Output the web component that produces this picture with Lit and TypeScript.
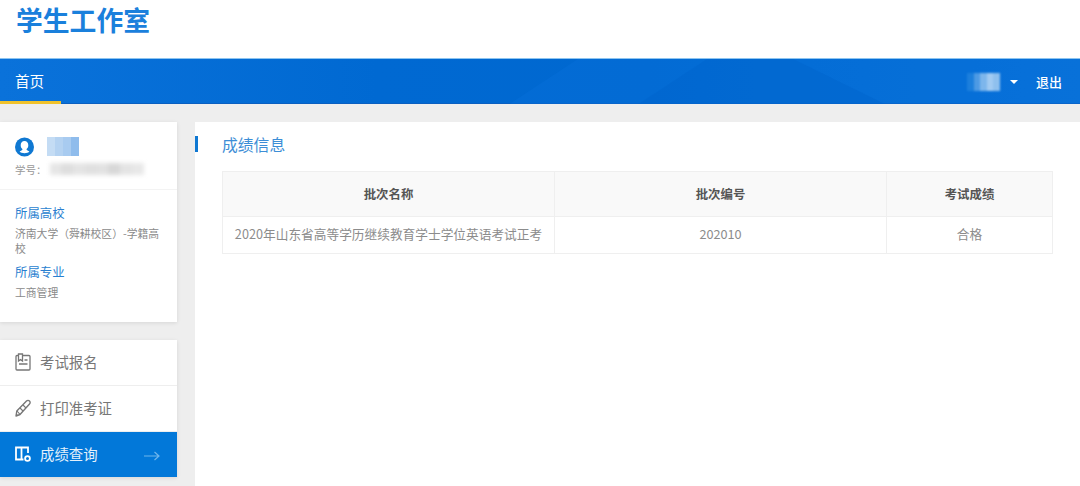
import { LitElement, html, css } from "lit";
import { customElement } from "lit/decorators.js";

const blurCells = (cols: string[], cls: string) =>
  html`<span class=${cls}>${cols.map((c) => html`<i style="background:${c}"></i>`)}</span>`;

@customElement("app-root")
export class AppRoot extends LitElement {
  static styles = css`
    :host {
      display: block;
      width: 1080px;
      height: 486px;
      overflow: hidden;
      background: #eeeeee;
      font-family: "Noto Sans CJK SC", "Liberation Sans", sans-serif;
      color: #888;
      text-spacing-trim: space-all;
    }
    * { box-sizing: border-box; }
    .brand {
      height: 58px;
      background: #fff;
      padding: 0 0 0 16px;
      font-size: 26.8px;
      line-height: 39px;
      font-weight: 700;
      color: #1a80dc;
    }
    .nav {
      height: 46px;
      display: flex;
      align-items: stretch;
      justify-content: space-between;
      border-top: 1px solid #8cc4f0;
      box-shadow: inset 0 -1px 0 #0a5fc0;
      background: linear-gradient(90deg, #0a72da 0%, #0069d2 35%, #0068d0 60%, #0870d8 100%);
      color: #fff;
      position: relative;
      overflow: hidden;
    }
    .sweep { position: absolute; inset: 0; width: 1080px; height: 46px; }
    .tab {
      position: relative;
      width: 61px;
      padding-left: 15px;
      font-size: 14.6px;
      line-height: 44px;
      border-bottom: 3px solid #f0c22c;
    }
    .user {
      position: relative;
      display: flex;
      align-items: center;
      padding-right: 18px;
      font-size: 13px;
      font-weight: 500;
    }
    .cells { display: grid; grid-auto-flow: column; filter: blur(1px); }
    .cells i { display: block; }
    .nav-name { width: 33px; height: 18px; margin-top: 1px; grid-auto-columns: 1fr; }
    .caret {
      width: 0;
      height: 0;
      margin: 0 18px 0 10px;
      border-left: 4px solid transparent;
      border-right: 4px solid transparent;
      border-top: 4px solid #fff;
    }
    .body {
      display: flex;
      gap: 18px;
      padding-top: 18px;
    }
    .side { width: 177px; flex: none; display: flex; flex-direction: column; gap: 18px; }
    .card { background: #fff; box-shadow: 0 1px 4px rgba(0, 0, 0, 0.1); }
    .profile { height: 200px; }
    .who {
      height: 68px;
      padding: 14px 0 0 15px;
      border-bottom: 1px solid #f3f3f3;
    }
    .who-row { display: flex; align-items: center; gap: 13px; height: 21px; }
    .who-name { width: 32px; height: 19px; grid-auto-columns: 1fr; filter: blur(0.5px); }
    .sid { display: flex; align-items: center; font-size: 10.5px; color: #999; height: 16px; margin-top: 4px; }
    .sid-blur { width: 94px; height: 12px; margin-left: 3px; grid-auto-columns: 1fr; filter: blur(2px); }
    .info { padding: 14px 15px 0; }
    .lbl { font-size: 12.4px; line-height: 18px; color: #2a7fd0; }
    .val { font-size: 10.8px; line-height: 15px; color: #8a8a8a; margin: 4px 0 7px; }
    .menu { height: 137px; display: flex; flex-direction: column; }
    .item {
      flex: 1;
      display: flex;
      align-items: center;
      gap: 9px;
      padding: 0 0 2px 15px;
      font-size: 14.4px;
      color: #777;
      border-bottom: 1px solid #eeeeee;
    }
    .item.active { background: #0278d9; color: #e4f1fb; border-bottom: none; position: relative; }
    .item svg { flex: none; }
    .arrow { position: absolute; left: 144px; top: 19px; }
    .main { flex: 1; background: #fff; height: 400px; padding: 14px 27px 0 0; }
    .title {
      display: flex;
      align-items: center;
      height: 16px;
      font-size: 15.8px;
      color: #3d8ed6;
      border-left: 3px solid #0f78d2;
      padding-left: 24px;
    }
    table {
      margin: 19px 0 0 27px;
      width: 831px;
      border-collapse: collapse;
      table-layout: fixed;
      font-size: 12.7px;
    }
    th, td { border: 1px solid #efefef; text-align: center; padding: 0; }
    th { height: 45px; background: #f9f9f9; color: #555; font-weight: 700; font-size: 12.4px; }
    td { height: 37px; color: #8c8c8c; padding-bottom: 3px; }
    .w1, .w2 { width: 332px; }
  `;

  render() {
    const navCells = ["#1c7fdc", "#4d9ae4", "#7db6ec", "#a2cbf2", "#8fc0ee"];
    const whoCells = ["#c4dcf4", "#b4d2f1", "#a8cbf0", "#8fbcec"];
    const sidCells = ["#e6e6e6", "#dedede", "#e4e4e4", "#e0e0e0", "#e2e2e2", "#d8d8d8", "#e4e4e4", "#e8e8e8"];
    return html`
      <div class="brand">学生工作室</div>
      <div class="nav">
        <svg class="sweep" viewBox="0 0 1080 46">
          <polygon points="508,46 578,0 1080,0 1080,46" fill="#0a74dc" opacity=".35"></polygon>
          <polygon points="637,46 707,0 793,0 887,46" fill="#0064cc" opacity=".45"></polygon>
        </svg>
        <div class="tab">首页</div>
        <div class="user">
          ${blurCells(navCells, "cells nav-name")}
          <span class="caret"></span>
          <span>退出</span>
        </div>
      </div>
      <div class="body">
        <div class="side">
          <div class="card profile">
            <div class="who">
              <div class="who-row">
                <svg width="19" height="20" viewBox="0 0 19 20">
                  <circle cx="9.5" cy="10" r="9.5" fill="#0f78d2"></circle>
                  <path d="M9.5 4c-2.4 0-3.8 1.900-3.800 4.200 0 1.600.6 3 1.700 3.800.2.5 0 1-.6 1.300-.9.5-1.600.8-2.200 1.300.7 1 3 1.600 4.900 1.600s4.200-.6 4.900-1.600c-.6-.5-1.300-.8-2.200-1.300-.6-.3-.8-.8-.6-1.300 1.100-.8 1.700-2.200 1.700-3.800C13.300 5.900 11.900 4 9.500 4z" fill="#fff"></path>
                </svg>
                ${blurCells(whoCells, "cells who-name")}
              </div>
              <div class="sid">学号：${blurCells(sidCells, "cells sid-blur")}</div>
            </div>
            <div class="info">
              <div class="lbl">所属高校</div>
              <div class="val">济南大学（舜耕校区）-学籍高校</div>
              <div class="lbl">所属专业</div>
              <div class="val">工商管理</div>
            </div>
          </div>
          <div class="card menu">
            <div class="item">
              <svg width="16" height="18" viewBox="0 0 16 18" fill="none" stroke="#777" stroke-width="1.3">
                <path d="M3.5 2.500H2a1 1 0 0 0-1 1V16a1 1 0 0 0 1 1h12a1 1 0 0 0 1-1V3.500a1 1 0 0 0-1-1H8"></path>
                <path d="M3.500 1h4v7l-2-1.400-2 1.400zM9.500 7h3M4 11h8.500"></path>
              </svg>
              <span>考试报名</span>
            </div>
            <div class="item">
              <svg width="16" height="18" viewBox="0 0 16 18" fill="none" stroke="#777" stroke-width="1.4">
                <path d="M1 17l.8-5L11.500 2a2.100 2.100 0 0 1 3 0 2.100 2.100 0 0 1 0 3L5 15.500z" stroke-linejoin="round"></path>
                <path d="M2 12l3 3.300M5 9l3 3M8 6l3 3" stroke-width="1.1"></path>
                <path d="M1 17l2.200-.6-1.600-1.800z" fill="#777" stroke="none"></path>
              </svg>
              <span>打印准考证</span>
            </div>
            <div class="item active">
              <svg width="16" height="18" viewBox="0 0 16 18" fill="none" stroke="#fff" stroke-width="1.8">
                <path d="M1 2.500h5.500v12H1zM6.500 2.500h6.500V8M6.500 14.500H8.500"></path>
                <circle cx="12.500" cy="13.500" r="2.400" stroke-width="1.8"></circle>
              </svg>
              <span>成绩查询</span>
              <svg class="arrow" width="16" height="10" viewBox="0 0 16 10" fill="none" stroke="#6fb5ec" stroke-width="1.2">
                <path d="M0 5h15M10.500 1l4.500 4-4.500 4"></path>
              </svg>
            </div>
          </div>
        </div>
        <div class="main">
          <div class="title">成绩信息</div>
          <table>
            <thead>
              <tr>
                <th class="w1">批次名称</th>
                <th class="w2">批次编号</th>
                <th>考试成绩</th>
              </tr>
            </thead>
            <tbody>
              <tr>
                <td>2020年山东省高等学历继续教育学士学位英语考试正考</td>
                <td>202010</td>
                <td>合格</td>
              </tr>
            </tbody>
          </table>
        </div>
      </div>
    `;
  }
}
